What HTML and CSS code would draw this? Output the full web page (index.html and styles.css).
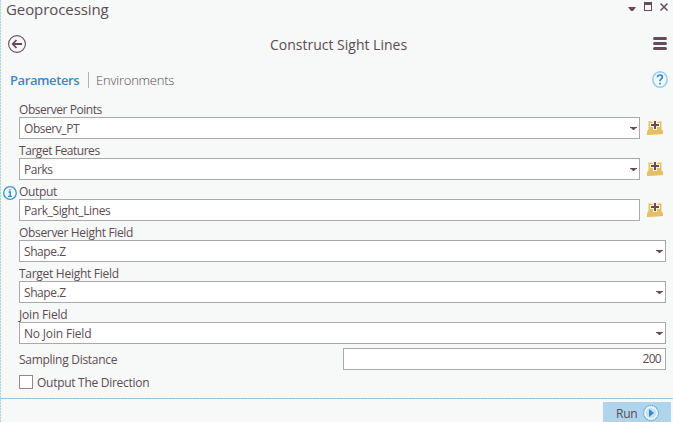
FILE: index.html
```html
<!DOCTYPE html>
<html lang="en">
<head>
<meta charset="utf-8">
<title>Geoprocessing</title>
<link rel="stylesheet" href="styles.css">
</head>
<body>
<svg class="defs" width="0" height="0" aria-hidden="true">
  <symbol id="caret" viewBox="0 0 7 3"><path d="M0 0h7v1H6L4 3H3L1 1H0z" fill="#694a5c"/></symbol>
  <symbol id="folder" viewBox="0 0 16 15">
    <path d="M1 1h4v1h6V1h4v9l1 1v3L0 15v-4l1-2z" fill="#f3dfa4"/>
    <path d="M2 2h12v7l2 2v3L0 15v-3l2-3z" fill="#e5be68"/>
    <path d="M6 0h4v3h3v4h-3v3H6V7H3V3h3z" fill="#fff5d0"/>
    <path d="M7 1h2v3h3v2H9v3H7V6H4V4h3z" fill="#694a5c"/>
  </symbol>
</svg>
<main class="pane">
  <header class="titlebar">
    <h1 class="pane-title">Geoprocessing</h1>
    <div class="window-tools">
      <svg class="tool-caret" width="8" height="4" viewBox="0 0 8 4"><path d="M0 0h8L5 4H3z" fill="#694a5c"/></svg>
      <svg class="tool-max" width="8" height="9" viewBox="0 0 8 9"><path d="M0 0h8v9H0zM1 3v5h6V3z" fill="#694a5c" fill-rule="evenodd"/></svg>
      <svg class="tool-close" width="8" height="8" viewBox="0 0 8 8"><path d="M.5.5l7 7M7.500.5l-7 7" stroke="#694a5c" stroke-width="1.500"/></svg>
    </div>
  </header>
  <div class="toolbar">
    <svg class="back" width="18" height="18" viewBox="0 0 18 18" fill="none" stroke="#694a5c"><circle cx="9" cy="9" r="8.400" stroke-width="1.100"/><path d="M14 9H5M8.500 5L4.700 9l3.800 4" stroke-width="1.800"/></svg>
    <h2 class="tool-title">Construct Sight Lines</h2>
    <svg class="menu" width="14" height="13" viewBox="0 0 14 13"><path d="M1.500 1.500h11M1.500 6.500h11M1.500 11.500h11" stroke="#694a5c" stroke-width="3" stroke-linecap="round"/></svg>
  </div>
  <nav class="tabs">
    <span class="tab active">Parameters</span>
    <span class="tab env">Environments</span>
    <svg class="help" width="16" height="17" viewBox="0 0 16 17"><ellipse cx="8" cy="8.500" rx="7.200" ry="7.700" fill="#eff8fd" stroke="#9dcde9" stroke-width="1.600"/><path d="M5.500 6.200C5.600 3.200 10.600 3.300 10.400 6.100 10.200 8 8 8 8 10.200M8 11.800v1.700" stroke="#3c87c8" stroke-width="1.700" fill="none"/></svg>
  </nav>
  <form class="params">
    <div class="label"><span class="tight">Observer Points</span></div>
    <div class="row"><div class="field"><span class="tight">Observ_PT</span><svg class="caret"><use href="#caret"/></svg></div><svg class="folder"><use href="#folder"/></svg></div>
    <div class="label"><span class="tight">Target Features</span></div>
    <div class="row"><div class="field"><span class="tight">Parks</span><svg class="caret"><use href="#caret"/></svg></div><svg class="folder"><use href="#folder"/></svg></div>
    <div class="label with-info"><svg class="info" width="14" height="14" viewBox="0 0 14 14"><circle cx="7" cy="7" r="6.300" fill="#f4fafe" stroke="#4590cb" stroke-width="1.300"/><path d="M7 3v1.600M5.500 6h1.700v4M5 10.400h4" stroke="#3c87c8" stroke-width="1.400" fill="none"/></svg><span>Output</span></div>
    <div class="row"><div class="field"><span class="snug">Park_Sight_Lines</span></div><svg class="folder"><use href="#folder"/></svg></div>
    <div class="label"><span>Observer Height Field</span></div>
    <div class="row"><div class="field"><span class="tight">Shape.Z</span><svg class="caret"><use href="#caret"/></svg></div></div>
    <div class="label"><span class="medium">Target Height Field</span></div>
    <div class="row"><div class="field"><span class="tight">Shape.Z</span><svg class="caret"><use href="#caret"/></svg></div></div>
    <div class="label"><span class="loose">Join Field</span></div>
    <div class="row"><div class="field"><span class="loose">No Join Field</span><svg class="caret"><use href="#caret"/></svg></div></div>
    <div class="row sampling"><span class="medium">Sampling Distance</span><div class="field number"><span class="digits">200</span></div></div>
    <div class="check"><span class="box"></span><span class="medium">Output The Direction</span></div>
  </form>
  <footer class="footer">
    <div class="run"><span class="run-text">Run</span><svg width="16" height="16" viewBox="0 0 16 16"><circle cx="8" cy="8" r="7.400" fill="#c4e2f3" stroke="#69abd9" stroke-width="1.200" stroke-dasharray="1.500 .6"/><circle cx="8" cy="8" r="6" fill="none" stroke="#eef8fd" stroke-width="1.400"/><path d="M6 4l5 4-5 4z" fill="#3c87c8"/></svg></div>
  </footer>
</main>
</body>
</html>
```
FILE: styles.css
```css
* { box-sizing: border-box; }
body {
  margin: 0;
  background: #f7f9f8;
  color: #5b4b55;
  font: 12px/16px "Open Sans", "Noto Sans", sans-serif;
  overflow: hidden;
}
svg { display: block; flex: none; }
span, h1, h2 { white-space: nowrap; }
.defs { position: absolute; }
.pane {
  width: 673px;
  height: 422px;
  display: flex;
  flex-direction: column;
  background: repeating-linear-gradient(#a5d5ef 0 2px, #e9efc9 2px 3px) 0 0 / 1px 100% no-repeat;
}
.titlebar { height: 24px; display: flex; justify-content: space-between; padding: 0 5px 0 6px; }
.pane-title { margin: -1px 0 0; font-size: 15px; line-height: 20px; font-weight: 400; letter-spacing: -.08px; }
.window-tools { display: flex; align-items: flex-start; }
.tool-caret { margin: 7px 8px 0 0; }
.tool-max { margin: 2px 8px 0 0; }
.tool-close { margin-top: 3px; }
.toolbar { height: 40px; display: flex; align-items: center; justify-content: space-between; padding: 0 6px 0 8px; }
.tool-title { margin: 2px 0 0 -2px; font-size: 14px; line-height: 20px; font-weight: 400; letter-spacing: 0; }
.menu { margin-top: -1px; }
.tabs { height: 32px; display: flex; align-items: center; padding: 0 5px 0 10px; font-size: 13px; }
.tab { line-height: 16px; }
.active { width: 79px; height: 16px; color: #3c87c8; font-weight: 600; letter-spacing: -.4px; border-right: 1px solid #b5b2b5; }
.env { font-weight: 300; margin-left: 7px; letter-spacing: -.22px; }
.help { margin-left: auto; margin-top: -1px; }
.params { margin: 0; padding: 2px 7px 0 19px; height: 302px; letter-spacing: -.33px; }
.tight { letter-spacing: -.45px; }
.snug { letter-spacing: -.38px; }
.medium { letter-spacing: -.28px; }
.loose { letter-spacing: -.18px; }
.digits { letter-spacing: -.7px; }
.label { height: 19px; padding-top: 4px; display: flex; }
.with-info { margin-left: -16px; gap: 2px; }
.info { margin-top: 2px; }
.row { display: flex; align-items: center; height: 22px; }
.field {
  flex: 1;
  height: 22px;
  border: 1px solid #aaa8aa;
  background: #fff;
  display: flex;
  align-items: center;
  justify-content: space-between;
  padding: 1px 2px 0 4px;
}
.caret { width: 7px; height: 3px; }
.folder { width: 16px; height: 15px; margin: -1px 3px 0 7px; }
.sampling { margin-top: 4px; justify-content: space-between; }
.sampling > span { padding-top: 2px; }
.number { flex: 0 0 323px; justify-content: flex-end; padding: 0 4px 1px 4px; }
.check { display: flex; align-items: center; height: 24px; gap: 4px; }
.check > span:last-child { padding-top: 2px; }
.box { width: 14px; height: 14px; border: 1px solid #97868f; background: #fff; }
.footer {
  height: 24px;
  display: flex;
  justify-content: flex-end;
  align-items: flex-end;
  padding-right: 2px;
  background: repeating-linear-gradient(90deg, #9acce9 0 2px, #8fb4c8 2px 3px) 0 0 / 100% 1px no-repeat;
}
.run { width: 68px; height: 20px; background: #aed5eb; display: flex; align-items: center; padding: 2px 12px 0 13px; justify-content: space-between; }
.run-text { letter-spacing: -.2px; padding-top: 1px; }
```
